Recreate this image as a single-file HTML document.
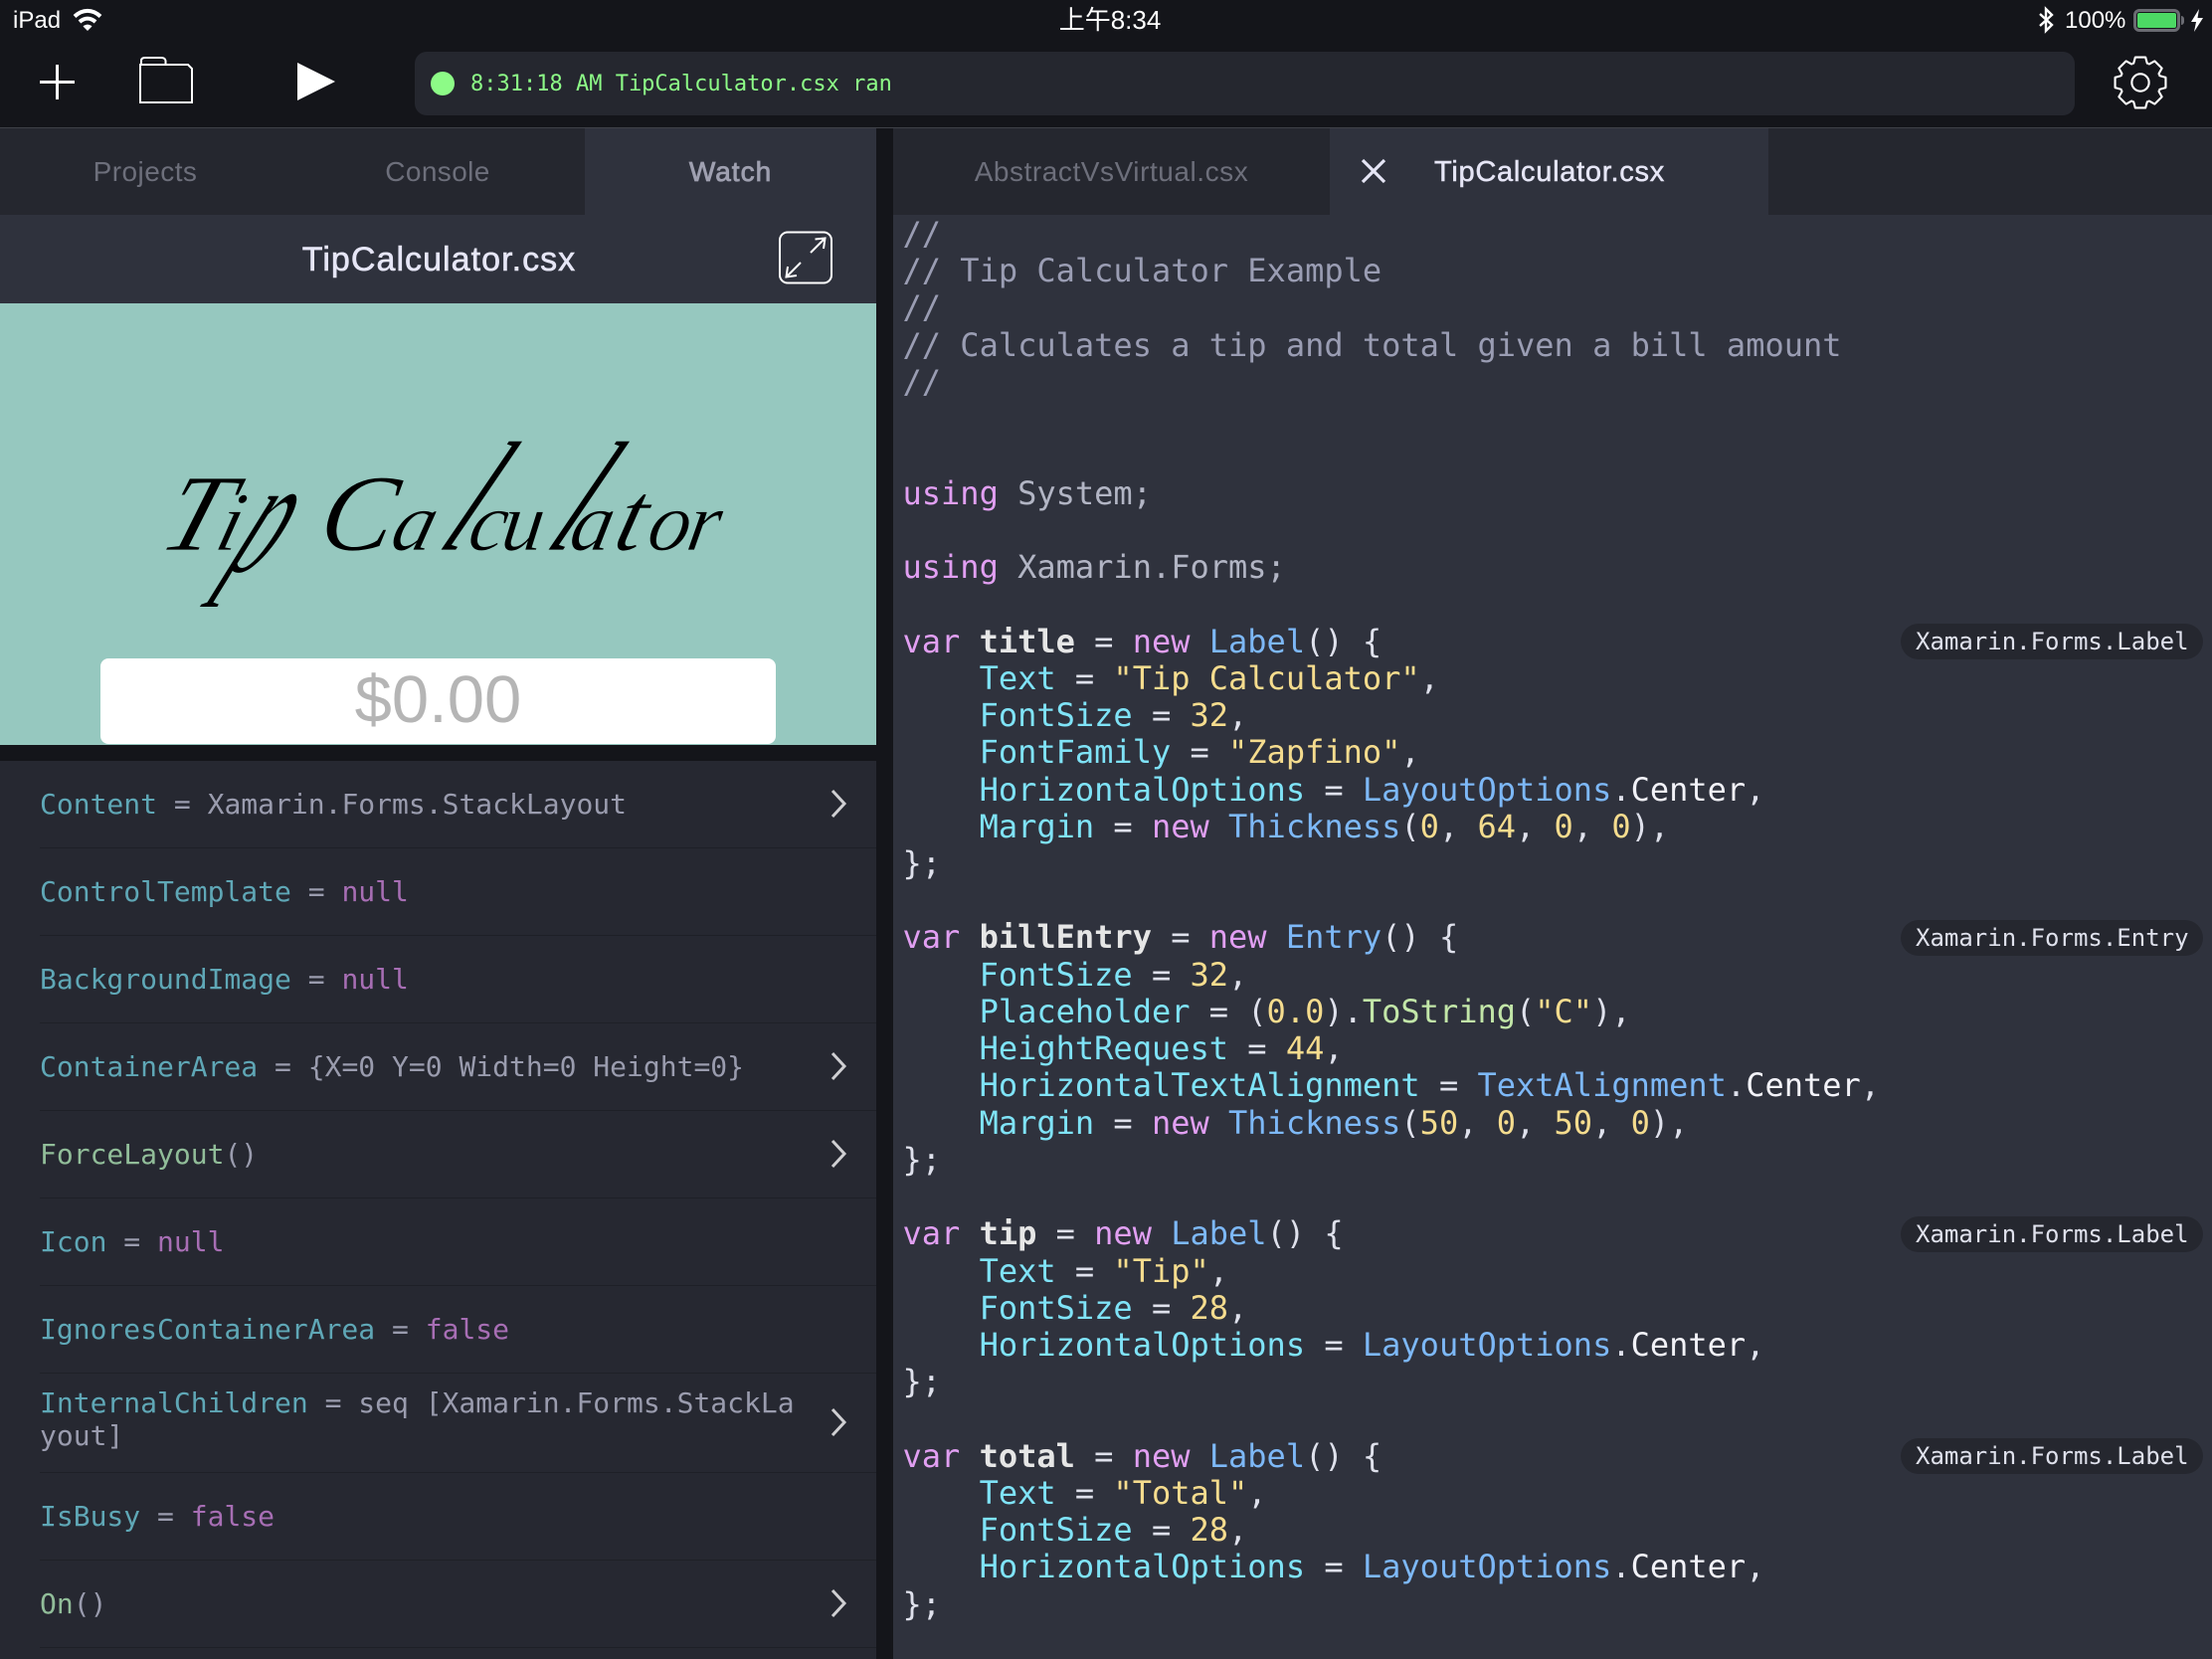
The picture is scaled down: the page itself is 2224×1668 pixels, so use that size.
<!DOCTYPE html>
<html><head><meta charset="utf-8"><style>
html,body{margin:0;padding:0;background:#14151a;}
#p{position:relative;width:2224px;height:1668px;overflow:hidden;background:#14151a;font-family:"Liberation Sans","Noto Sans CJK SC",sans-serif;}
.a{position:absolute;}
.t{position:absolute;white-space:nowrap;}
.c{text-align:center;}
.mono{font-family:"DejaVu Sans Mono","Liberation Mono",monospace;}
pre{margin:0;position:absolute;left:907.5px;top:217px;font-family:"DejaVu Sans Mono","Liberation Mono",monospace;font-size:32px;line-height:37.24px;color:#dfe1ec;}
.k{color:#e19ff2;}.y{color:#7db8f7;}.m{color:#7fe3f7;}.s{color:#f5dc8e;}.g{color:#9a9db3;}.b{font-weight:bold;color:#e6e6e6;}.w{color:#f2f2f8;}.u{color:#b2b5c4;}.f{color:#c2e6a8;}
.badge{position:absolute;left:1911px;width:304px;height:36px;background:#25272f;border-radius:18px;color:#dfe1ec;font-family:"DejaVu Sans Mono",monospace;font-size:24px;line-height:36px;padding-left:15px;box-sizing:border-box;white-space:nowrap;}
.row{position:absolute;left:0;width:881px;font-family:"DejaVu Sans Mono",monospace;font-size:28px;color:#9a9cae;}
.row .tx{position:absolute;left:40px;white-space:pre;}
.row .sep{position:absolute;left:40px;right:0;bottom:0;height:1px;background:#1e2027;}
.row svg{position:absolute;left:832px;}
.pn{color:#5fa7b6;}.nl{color:#a76eb4;}.mt{color:#91bd99;}
.z{font-family:"Liberation Serif",serif;font-style:italic;fill:#000;stroke:#96c8bf;stroke-width:.8px;}
</style></head><body><div id="p">

<!-- status bar -->
<div class="t" style="left:13px;top:5px;font-size:24px;line-height:32px;color:#fff;">iPad</div>
<svg class="a" style="left:70px;top:6px" width="36" height="28" viewBox="0 0 36 28">
<path d="M5 10.5C13 3 23 3 31 10.5" fill="none" stroke="#fff" stroke-width="4"/>
<path d="M10 16C15 11.5 21 11.5 26 16" fill="none" stroke="#fff" stroke-width="4"/>
<path d="M13.5 20.5C16.5 18 19.5 18 22.5 20.5L18 25Z" fill="#fff"/></svg>
<div class="t c" style="left:1016px;width:200px;top:4px;font-size:26px;line-height:32px;color:#fff;">上午8:34</div>
<svg class="a" style="left:2048px;top:6px" width="20" height="28" viewBox="0 0 20 28">
<path d="M3 8L15 19L9 25V3L15 9L3 20" fill="none" stroke="#fff" stroke-width="2.4"/></svg>
<div class="t" style="left:2076px;top:5px;font-size:24px;line-height:32px;color:#fff;">100%</div>
<div class="a" style="left:2145px;top:9px;width:47px;height:23px;border:3px solid #6a6b72;border-radius:6px;box-sizing:border-box;"></div>
<div class="a" style="left:2149px;top:13px;width:39px;height:15px;background:#4cd964;border-radius:2px;"></div>
<div class="a" style="left:2193px;top:16px;width:3px;height:9px;background:#6a6b72;border-radius:0 3px 3px 0;"></div>
<svg class="a" style="left:2202px;top:9px" width="14" height="23" viewBox="0 0 14 23"><path d="M9 0L1 13H6L4 23L13 9H7.5Z" fill="#fff"/></svg>

<!-- toolbar -->
<svg class="a" style="left:0;top:50px" width="360" height="70" viewBox="0 50 360 70">
<path d="M40 82.5H75M57.5 65V100" stroke="#fff" stroke-width="3" fill="none"/>
<path d="M141 103V65H189L193 69V103ZM142 65V61Q142 58 146 58H162Q166 58 166.500 61V65" fill="none" stroke="#fff" stroke-width="2"/>
<path d="M299 63L337 82L299 101Z" fill="#fff"/></svg>
<div class="a" style="left:417px;top:52px;width:1669px;height:64px;background:#25272f;border-radius:12px;"></div>
<div class="a" style="left:433px;top:72px;width:24px;height:24px;border-radius:50%;background:#8dfb87;"></div>
<div class="t mono" style="left:473px;top:69px;font-size:22px;line-height:32px;color:#8dfb87;">8:31:18 AM TipCalculator.csx ran</div>
<svg class="a" style="left:2120px;top:52px" width="64" height="62" viewBox="-32 -31 64 62"><g fill="none" stroke="#fff" stroke-width="2.2" stroke-linejoin="round" transform="scale(.96)">
<circle r="9"/>
<path d="M-8.04 -19.4L-7 -20.5L-5.500 -26Q-5.500 -26.500 -5 -26.500H5Q5.500 -26.500 5.500 -26L7 -20.500L8.04 -19.4"/>
<path transform="rotate(45)" d="M-8.04 -19.4L-7 -20.5L-5.500 -26Q-5.500 -26.500 -5 -26.500H5Q5.500 -26.500 5.500 -26L7 -20.500L8.04 -19.4"/>
<path transform="rotate(90)" d="M-8.04 -19.4L-7 -20.5L-5.500 -26Q-5.500 -26.500 -5 -26.500H5Q5.500 -26.500 5.500 -26L7 -20.500L8.04 -19.4"/>
<path transform="rotate(135)" d="M-8.04 -19.4L-7 -20.5L-5.500 -26Q-5.500 -26.500 -5 -26.500H5Q5.500 -26.500 5.500 -26L7 -20.500L8.04 -19.4"/>
<path transform="rotate(180)" d="M-8.04 -19.4L-7 -20.5L-5.500 -26Q-5.500 -26.500 -5 -26.500H5Q5.500 -26.500 5.500 -26L7 -20.500L8.04 -19.4"/>
<path transform="rotate(225)" d="M-8.04 -19.4L-7 -20.5L-5.500 -26Q-5.500 -26.500 -5 -26.500H5Q5.500 -26.500 5.500 -26L7 -20.500L8.04 -19.4"/>
<path transform="rotate(270)" d="M-8.04 -19.4L-7 -20.5L-5.500 -26Q-5.500 -26.500 -5 -26.500H5Q5.500 -26.500 5.500 -26L7 -20.500L8.04 -19.4"/>
<path transform="rotate(315)" d="M-8.04 -19.4L-7 -20.5L-5.500 -26Q-5.500 -26.500 -5 -26.500H5Q5.500 -26.500 5.500 -26L7 -20.500L8.04 -19.4"/>
</g></svg>
<div class="a" style="left:0;top:128px;width:2224px;height:1px;background:#3f4148;"></div>

<!-- left tabs -->
<div class="a" style="left:0;top:129px;width:881px;height:87px;background:#25272f;"></div>
<div class="a" style="left:588px;top:129px;width:293px;height:87px;background:#2f323d;"></div>
<div class="t c" style="left:0;width:292px;top:153px;font-size:28px;line-height:40px;color:#6d6f7b;letter-spacing:.45px;">Projects</div>
<div class="t c" style="left:294px;width:292px;top:153px;font-size:28px;line-height:40px;color:#6d6f7b;letter-spacing:.4px;">Console</div>
<div class="t c" style="left:588px;width:293px;top:153px;font-size:28px;line-height:40px;color:#9fa0b0;letter-spacing:1px;-webkit-text-stroke:.8px #9fa0b0;">Watch</div>

<!-- left header -->
<div class="a" style="left:0;top:216px;width:881px;height:89px;background:#2f323d;"></div>
<div class="t c" style="left:1px;width:881px;top:241px;font-size:34px;line-height:40px;color:#e6e6f6;letter-spacing:1.05px;-webkit-text-stroke:.6px #e6e6f6;">TipCalculator.csx</div>
<svg class="a" style="left:780px;top:230px" width="60" height="58" viewBox="780 230 60 58">
<rect x="784" y="233.500" width="52" height="51" rx="8" fill="none" stroke="#fff" stroke-width="2"/>
<path d="M815 254L830 239M819.500 240.500L829.500 239.500L828 250M805 264L790 279M792 268L790.500 278.500L801 277" fill="none" stroke="#fff" stroke-width="2"/></svg>

<!-- preview -->
<div class="a" style="left:0;top:305px;width:881px;height:444px;background:#96c8bf;"></div>
<svg class="a" style="left:0;top:305px" width="881" height="444" viewBox="0 305 881 444">
<text class="z" font-size="110" transform="translate(157 553) skewX(-18)">T</text>
<text class="z" font-size="84" transform="translate(214 553) skewX(-15)">i</text>
<text class="z" font-size="84" transform="translate(224 575) skewX(-28) scale(1 2)">p</text>
<text class="z" font-size="110" transform="translate(317 553) skewX(-12)">C</text>
<text class="z" font-size="84" transform="translate(390 553) skewX(-15)">a</text>
<text class="z" font-size="158" transform="translate(438 553) skewX(-30) scale(.6 1)">l</text>
<text class="z" font-size="84" transform="translate(468 553) skewX(-12)">c</text>
<text class="z" font-size="84" transform="translate(502 553) skewX(-8)">u</text>
<text class="z" font-size="158" transform="translate(546 553) skewX(-30) scale(.6 1)">l</text>
<text class="z" font-size="84" transform="translate(570 553) skewX(-12)">a</text>
<text class="z" font-size="100" transform="translate(614 553) skewX(-15)">t</text>
<text class="z" font-size="84" transform="translate(648 553) skewX(-12)">o</text>
<text class="z" font-size="84" transform="translate(688 553) skewX(-10)">r</text>
</svg>
<div class="a c" style="left:101px;top:662px;width:679px;height:86px;background:#fff;border-radius:8px;color:#b5b5b5;font-size:67px;line-height:84px;">$0.00</div>

<!-- dividers -->
<div class="a" style="left:881px;top:129px;width:17px;height:1539px;background:#14151a;"></div>

<!-- watch list -->
<div class="a" style="left:0;top:765px;width:881px;height:903px;background:#262831;"></div>
<div class="row" style="top:765px;height:88px;"><div class="tx" style="top:0;line-height:87px;"><span class="pn">Content</span> = Xamarin.Forms.StackLayout</div><div class="sep"></div><svg style="top:28px" width="22" height="30" viewBox="0 0 22 30"><path d="M5 2L17 15L5 28" fill="none" stroke="#cfcfd2" stroke-width="3"/></svg></div>
<div class="row" style="top:853px;height:88px;"><div class="tx" style="top:0;line-height:87px;"><span class="pn">ControlTemplate</span> = <span class="nl">null</span></div><div class="sep"></div></div>
<div class="row" style="top:941px;height:88px;"><div class="tx" style="top:0;line-height:87px;"><span class="pn">BackgroundImage</span> = <span class="nl">null</span></div><div class="sep"></div></div>
<div class="row" style="top:1029px;height:88px;"><div class="tx" style="top:0;line-height:87px;"><span class="pn">ContainerArea</span> = {X=0 Y=0 Width=0 Height=0}</div><div class="sep"></div><svg style="top:28px" width="22" height="30" viewBox="0 0 22 30"><path d="M5 2L17 15L5 28" fill="none" stroke="#cfcfd2" stroke-width="3"/></svg></div>
<div class="row" style="top:1117px;height:88px;"><div class="tx" style="top:0;line-height:87px;"><span class="mt">ForceLayout</span>()</div><div class="sep"></div><svg style="top:28px" width="22" height="30" viewBox="0 0 22 30"><path d="M5 2L17 15L5 28" fill="none" stroke="#cfcfd2" stroke-width="3"/></svg></div>
<div class="row" style="top:1205px;height:88px;"><div class="tx" style="top:0;line-height:87px;"><span class="pn">Icon</span> = <span class="nl">null</span></div><div class="sep"></div></div>
<div class="row" style="top:1293px;height:88px;"><div class="tx" style="top:0;line-height:87px;"><span class="pn">IgnoresContainerArea</span> = <span class="nl">false</span></div><div class="sep"></div></div>
<div class="row" style="top:1381px;height:100px;"><div class="tx" style="top:14px;line-height:32.500px;"><span class="pn">InternalChildren</span> = seq [Xamarin.Forms.StackLa
yout]</div><div class="sep"></div><svg style="top:34px" width="22" height="30" viewBox="0 0 22 30"><path d="M5 2L17 15L5 28" fill="none" stroke="#cfcfd2" stroke-width="3"/></svg></div>
<div class="row" style="top:1481px;height:88px;"><div class="tx" style="top:0;line-height:87px;"><span class="pn">IsBusy</span> = <span class="nl">false</span></div><div class="sep"></div></div>
<div class="row" style="top:1569px;height:88px;"><div class="tx" style="top:0;line-height:87px;"><span class="mt">On</span>()</div><div class="sep"></div><svg style="top:28px" width="22" height="30" viewBox="0 0 22 30"><path d="M5 2L17 15L5 28" fill="none" stroke="#cfcfd2" stroke-width="3"/></svg></div>

<!-- right tabs -->
<div class="a" style="left:898px;top:129px;width:1326px;height:87px;background:#25272f;"></div>
<div class="a" style="left:1337px;top:129px;width:441px;height:87px;background:#2f323d;"></div>
<div class="t c" style="left:898px;width:439px;top:153px;font-size:28px;line-height:40px;color:#6d6f7b;letter-spacing:.55px;">AbstractVsVirtual.csx</div>
<svg class="a" style="left:1367px;top:159px" width="28" height="26" viewBox="0 0 28 26"><path d="M3 2L25 24M25 2L3 24" stroke="#e6e6f6" stroke-width="3.200" fill="none"/></svg>
<div class="t" style="left:1442px;top:153px;font-size:29px;line-height:40px;color:#e6e6f6;letter-spacing:.72px;-webkit-text-stroke:.5px #e6e6f6;">TipCalculator.csx</div>

<!-- code -->
<div class="a" style="left:898px;top:216px;width:1326px;height:1452px;background:#2f323d;"></div>
<pre><span class="g">//
// Tip Calculator Example
//
// Calculates a tip and total given a bill amount
//</span>


<span class="k">using</span> <span class="u">System;</span>

<span class="k">using</span> <span class="u">Xamarin.Forms;</span>

<span class="k">var</span> <span class="b">title</span> = <span class="k">new</span> <span class="y">Label</span>() {
    <span class="m">Text</span> = <span class="s">"Tip Calculator"</span>,
    <span class="m">FontSize</span> = <span class="s">32</span>,
    <span class="m">FontFamily</span> = <span class="s">"Zapfino"</span>,
    <span class="m">HorizontalOptions</span> = <span class="y">LayoutOptions</span>.<span class="w">Center</span>,
    <span class="m">Margin</span> = <span class="k">new</span> <span class="y">Thickness</span>(<span class="s">0</span>, <span class="s">64</span>, <span class="s">0</span>, <span class="s">0</span>),
};

<span class="k">var</span> <span class="b">billEntry</span> = <span class="k">new</span> <span class="y">Entry</span>() {
    <span class="m">FontSize</span> = <span class="s">32</span>,
    <span class="m">Placeholder</span> = (<span class="s">0.0</span>).<span class="f">ToString</span>(<span class="s">"C"</span>),
    <span class="m">HeightRequest</span> = <span class="s">44</span>,
    <span class="m">HorizontalTextAlignment</span> = <span class="y">TextAlignment</span>.<span class="w">Center</span>,
    <span class="m">Margin</span> = <span class="k">new</span> <span class="y">Thickness</span>(<span class="s">50</span>, <span class="s">0</span>, <span class="s">50</span>, <span class="s">0</span>),
};

<span class="k">var</span> <span class="b">tip</span> = <span class="k">new</span> <span class="y">Label</span>() {
    <span class="m">Text</span> = <span class="s">"Tip"</span>,
    <span class="m">FontSize</span> = <span class="s">28</span>,
    <span class="m">HorizontalOptions</span> = <span class="y">LayoutOptions</span>.<span class="w">Center</span>,
};

<span class="k">var</span> <span class="b">total</span> = <span class="k">new</span> <span class="y">Label</span>() {
    <span class="m">Text</span> = <span class="s">"Total"</span>,
    <span class="m">FontSize</span> = <span class="s">28</span>,
    <span class="m">HorizontalOptions</span> = <span class="y">LayoutOptions</span>.<span class="w">Center</span>,
};</pre>
<div class="badge" style="top:627px;">Xamarin.Forms.Label</div>
<div class="badge" style="top:925px;">Xamarin.Forms.Entry</div>
<div class="badge" style="top:1223px;">Xamarin.Forms.Label</div>
<div class="badge" style="top:1446px;">Xamarin.Forms.Label</div>
</div></body></html>
